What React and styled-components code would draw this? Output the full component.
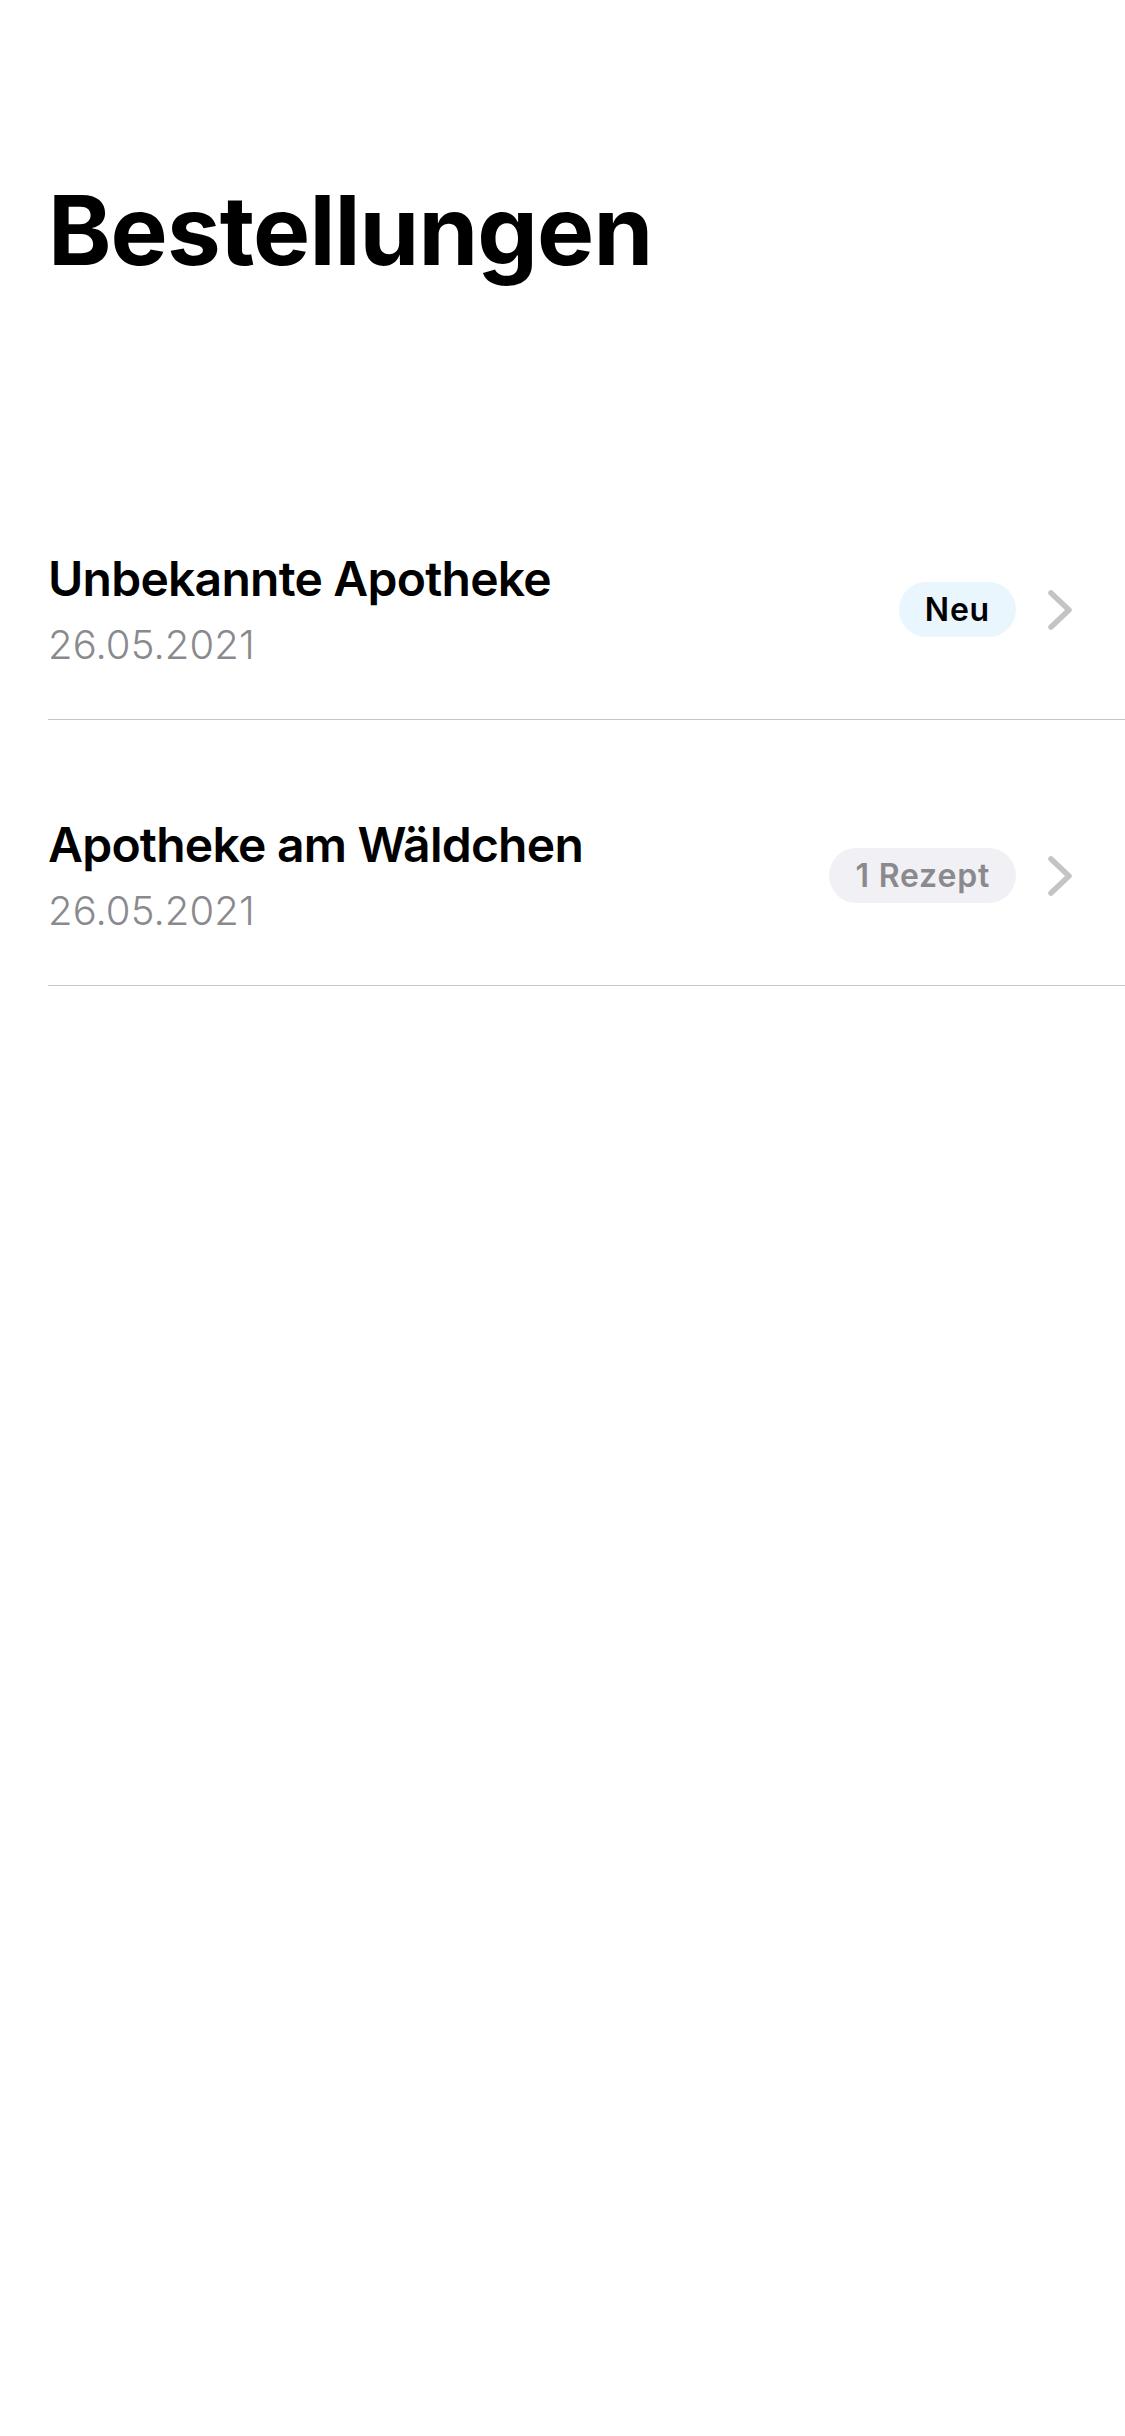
import React from "react";
import styled, { createGlobalStyle } from "styled-components";

const GlobalStyle = createGlobalStyle`
  html, body {
    margin: 0;
    padding: 0;
    background: #ffffff;
  }
  body {
    font-family: Inter, "Noto Sans", "Liberation Sans", sans-serif;
    -webkit-font-smoothing: antialiased;
  }
`;

const orders = [
  { id: 1, name: "Unbekannte Apotheke", date: "26.05.2021", badge: "Neu", tone: "new" },
  { id: 2, name: "Apotheke am Wäldchen", date: "26.05.2021", badge: "1 Rezept", tone: "muted" },
];

function Chevron() {
  return (
    <ChevronIcon viewBox="0 0 26 42" aria-hidden="true">
      <polyline points="4,4 22,21 4,38" />
    </ChevronIcon>
  );
}

function OrderRow({ name, date, badge, tone }) {
  return (
    <Row>
      <RowText>
        <PharmacyName>{name}</PharmacyName>
        <OrderDate>{date}</OrderDate>
      </RowText>
      <RowAccessory>
        <Badge $tone={tone}>{badge}</Badge>
        <Chevron />
      </RowAccessory>
    </Row>
  );
}

function App() {
  return (
    <Screen>
      <GlobalStyle />
      <LargeTitle>Bestellungen</LargeTitle>
      <OrderList>
        {orders.map((o) => (
          <OrderRow key={o.id} {...o} />
        ))}
      </OrderList>
    </Screen>
  );
}

const Screen = styled.div`
  width: 1125px;
  min-height: 2436px;
  background: #ffffff;
  display: flex;
  flex-direction: column;
  padding-top: 172px;
  box-sizing: border-box;
`;

const LargeTitle = styled.h1`
  margin: 0;
  padding-left: 48px;
  font-family: Inter, "Liberation Sans", sans-serif;
  font-size: 96px;
  font-weight: 700;
  line-height: 116px;
  letter-spacing: -0.9px;
  color: #000000;
`;

const OrderList = styled.div`
  margin-top: 166px;
  padding-left: 48px;
  display: flex;
  flex-direction: column;
`;

const Row = styled.div`
  display: flex;
  align-items: center;
  justify-content: space-between;
  padding: 95px 52px 49px 0;
  border-bottom: 1.5px solid #c6c6c8;
`;

const RowText = styled.div`
  display: flex;
  flex-direction: column;
  gap: 11px;
`;

const PharmacyName = styled.div`
  font-size: 48px;
  font-weight: 600;
  line-height: 60px;
  letter-spacing: -0.75px;
  color: #000000;
`;

const OrderDate = styled.div`
  font-size: 40px;
  font-weight: 300;
  line-height: 50px;
  letter-spacing: 0.1px;
  color: #8a8a8e;
`;

const RowAccessory = styled.div`
  display: flex;
  align-items: center;
  gap: 31px;
`;

const Badge = styled.span`
  display: inline-flex;
  align-items: center;
  height: 55px;
  padding: 0 26px;
  border-radius: 28px;
  font-size: 32px;
  font-weight: 600;
  letter-spacing: 0.8px;
  background: ${(p) => (p.$tone === "new" ? "#eaf6fd" : "#f1f1f5")};
  color: ${(p) => (p.$tone === "new" ? "#000000" : "#8a8a8e")};
`;

const ChevronIcon = styled.svg`
  width: 26px;
  height: 42px;
  fill: none;
  stroke: #c4c4c7;
  stroke-width: 5.5;
  stroke-linecap: round;
  stroke-linejoin: round;
`;

export default App;
